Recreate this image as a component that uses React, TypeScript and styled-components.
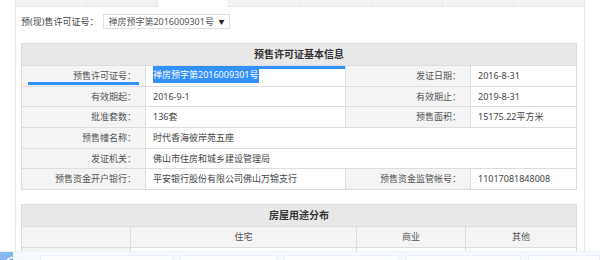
import React from "react";
import styled, { createGlobalStyle } from "styled-components";

const GlobalStyle = createGlobalStyle`
    html, body {
        margin: 0;
        padding: 0;
        background: #fff;
    }
    body {
        font-family: "Noto Sans", "Noto Sans CJK SC", sans-serif;
        font-size: 9px;
        color: #444;
    }
`;

const Page = styled.div`
    position: relative;
    width: 600px;
    height: 260px;
    overflow: hidden;
    background: #fff;
`;

const Panel = styled.div`
    box-sizing: border-box;
    margin-left: 15px;
    width: 570px;
    height: 260px;
    border-left: 1px solid #e6e6e6;
    border-right: 1px solid #e6e6e6;
`;

const Tabs = styled.div`
    display: flex;
    height: 7px;
    gap: 1px;
    background: #e8e8e8;
    border-bottom: 1px solid #e6e6e6;
    box-sizing: border-box;
`;

const Tab = styled.div<{ $active?: boolean }>`
    flex: 1;
    background: ${(p) => (p.$active ? "#fff" : "#f3f3f3")};
    margin-bottom: ${(p) => (p.$active ? "-1px" : "0")};
`;

const Body = styled.div`
    padding: 7px 6px 0 5px;
`;

const Filter = styled.div`
    display: flex;
    align-items: center;
    height: 15px;
    margin-bottom: 14px;
    color: #444;
`;

const FilterLabel = styled.span`
    margin-right: 5px;
`;

const Select = styled.div`
    box-sizing: border-box;
    display: flex;
    align-items: center;
    justify-content: space-between;
    width: 127px;
    height: 15px;
    padding: 0 5px 0 4px;
    border: 1px solid #e0e0e0;
    color: #555;

    span:last-child {
        font-size: 6px;
        color: #222;
    }
`;

const Grid = styled.div<{ $cols: string }>`
    box-sizing: border-box;
    display: grid;
    grid-template-columns: ${(p) => p.$cols};
    width: 556px;
    border-top: 1px solid #dcdcdc;
    border-left: 1px solid #dcdcdc;
    margin-bottom: 14px;
`;

const Title = styled.div`
    grid-column: 1 / -1;
    height: 21px;
    line-height: 21px;
    text-align: center;
    font-size: 10px;
    font-weight: bold;
    color: #333;
    background: #e8e8e8;
    border-right: 1px solid #dcdcdc;
    border-bottom: 1px solid #dcdcdc;
`;

const Cell = styled.div<{ $label?: boolean; $span?: number; $head?: boolean }>`
    position: relative;
    box-sizing: border-box;
    height: 20.67px;
    line-height: 20px;
    white-space: nowrap;
    grid-column: ${(p) => (p.$span ? `span ${p.$span}` : "auto")};
    padding: ${(p) => (p.$label ? "0 9px 0 0" : p.$head ? "0" : "0 0 0 7px")};
    text-align: ${(p) => (p.$label ? "right" : p.$head ? "center" : "left")};
    background: ${(p) => (p.$label || p.$head ? "#f4f4f4" : "#fff")};
    color: ${(p) => (p.$label || p.$head ? "#555" : "#444")};
    border-right: 1px solid #dcdcdc;
    border-bottom: 1px solid #dcdcdc;
`;

/* selection marks left by a drag across the first row */
const MarkedLabel = styled(Cell)`
    &::after {
        content: "";
        position: absolute;
        left: 6px;
        right: 6px;
        bottom: 1px;
        height: 3px;
        background: #3390ff;
    }
`;

const MarkedValue = styled(Cell)`
    &::before {
        content: "";
        position: absolute;
        left: 7px;
        right: 0;
        top: 0;
        height: 3px;
        background: #3390ff;
    }
`;

const Selected = styled.span`
    display: inline-block;
    line-height: 17px;
    padding-right: 1px;
    background: #3390ff;
    color: #fff;
    vertical-align: top;
`;

const Dock = styled.div`
    position: absolute;
    left: 0;
    right: 0;
    bottom: 0;
    height: 8px;
    display: flex;
    align-items: flex-end;
    background: rgba(246, 249, 253, 0.96);
    border-top: 1px solid #eef2f8;
`;

const DockIcon = styled.div`
    width: 25px;
    height: 8px;
    background: #86b7ee;
    margin-right: 27px;
    overflow: hidden;
`;

const DockBoxes = styled.div`
    display: flex;
    gap: 7px;
    flex: 1;
    height: 5px;
`;

const DockBox = styled.div<{ $w: number }>`
    width: ${(p) => p.$w}px;
    background: #fdfeff;
    border: 1px solid #edf1f6;
    border-bottom: none;
`;

const infoRows = [
    ["有效期起：", "2016-9-1", "有效期止：", "2019-8-31"],
    ["批准套数：", "136套", "预售面积：", "15175.22平方米"],
];

const App: React.FC = () => {
    return (
        <Page>
            <GlobalStyle />
            <Panel>
                <Tabs>
                    {Array.from({ length: 8 }).map((_, i) => (
                        <Tab key={i} $active={i === 2} />
                    ))}
                </Tabs>
                <Body>
                    <Filter>
                        <FilterLabel>预(现)售许可证号：</FilterLabel>
                        <Select>
                            <span>禅房预字第2016009301号</span>
                            <span>▼</span>
                        </Select>
                    </Filter>

                    <Grid $cols="124px 200px 125px 106px">
                        <Title>预售许可证基本信息</Title>
                        <MarkedLabel $label>预售许可证号：</MarkedLabel>
                        <MarkedValue>
                            <Selected>禅房预字第2016009301号</Selected>
                        </MarkedValue>
                        <Cell $label>发证日期：</Cell>
                        <Cell>2016-8-31</Cell>
                        {infoRows.map((r) => (
                            <React.Fragment key={r[0]}>
                                <Cell $label>{r[0]}</Cell>
                                <Cell>{r[1]}</Cell>
                                <Cell $label>{r[2]}</Cell>
                                <Cell>{r[3]}</Cell>
                            </React.Fragment>
                        ))}
                        <Cell $label>预售幢名称：</Cell>
                        <Cell $span={3}>时代香海彼岸苑五座</Cell>
                        <Cell $label>发证机关：</Cell>
                        <Cell $span={3}>佛山市住房和城乡建设管理局</Cell>
                        <Cell $label>预售资金开户银行：</Cell>
                        <Cell>平安银行股份有限公司佛山万锦支行</Cell>
                        <Cell $label>预售资金监管帐号：</Cell>
                        <Cell>11017081848008</Cell>
                    </Grid>

                    <Grid $cols="109px 226px 109px 111px">
                        <Title>房屋用途分布</Title>
                        <Cell $head></Cell>
                        <Cell $head>住宅</Cell>
                        <Cell $head>商业</Cell>
                        <Cell $head>其他</Cell>
                        <Cell $head></Cell>
                        <Cell></Cell>
                        <Cell></Cell>
                        <Cell></Cell>
                    </Grid>
                </Body>
            </Panel>

            <Dock>
                <DockIcon>
                    <svg width="25" height="8" viewBox="0 0 25 8">
                        <ellipse cx="12.5" cy="9" rx="6" ry="5.5" fill="none" stroke="#fff" strokeWidth="1.6" />
                    </svg>
                </DockIcon>
                <DockBoxes>
                    <DockBox $w={131} />
                    <DockBox $w={95} />
                    <DockBox $w={113} />
                    <DockBox $w={113} />
                    <DockBox $w={70} />
                </DockBoxes>
            </Dock>
        </Page>
    );
};

export default App;
